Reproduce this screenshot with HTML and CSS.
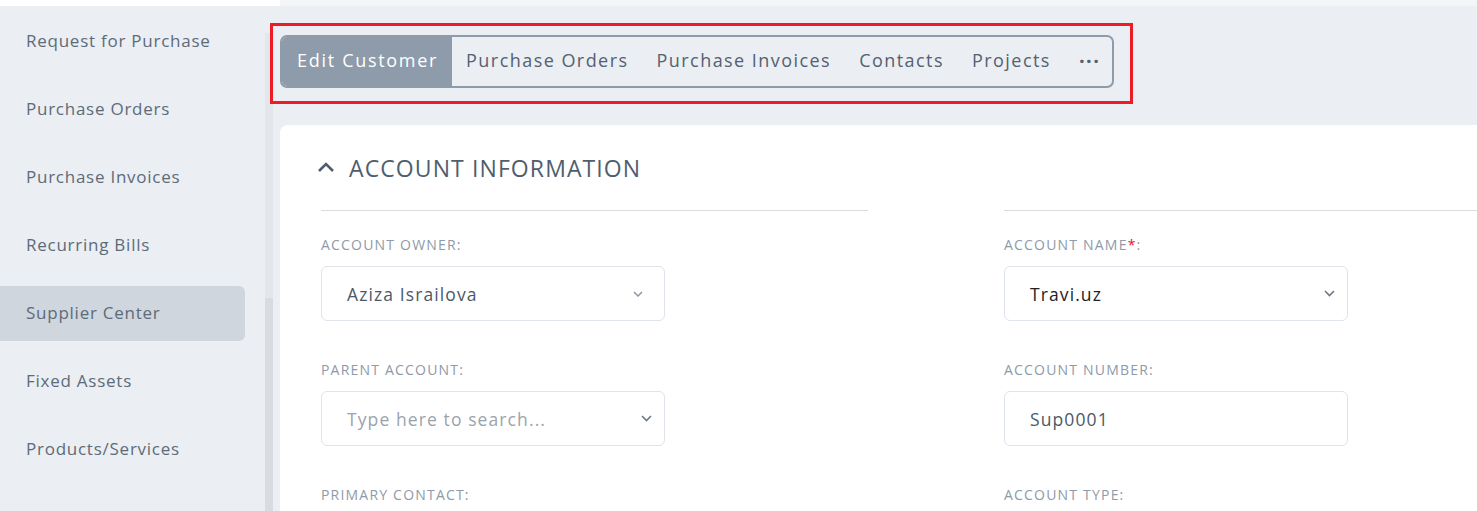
FILE: index.html
```html
<!DOCTYPE html>
<html lang="en">

<head>
    <meta charset="UTF-8">
    <meta name="viewport" content="width=device-width, initial-scale=1.0">
    <title>Edit Customer</title>
    <link rel="stylesheet" href="styles.css">
</head>

<body>

    <div class="app">
        <aside class="sidebar">
            <div class="nav-clip">
                <ul class="nav">
                    <li>Request for Purchase</li>
                    <li>Purchase Orders</li>
                    <li>Purchase Invoices</li>
                    <li>Recurring Bills</li>
                    <li class="active">Supplier Center</li>
                    <li>Fixed Assets</li>
                    <li>Products/Services</li>
                </ul>
            </div>
            <div class="scroll-track">
                <div class="scroll-thumb"></div>
            </div>
        </aside>

        <main class="main">
            <div class="highlight">
                <nav class="tabs">
                    <span class="tab active">Edit Customer</span>
                    <span class="tab">Purchase Orders</span>
                    <span class="tab">Purchase Invoices</span>
                    <span class="tab">Contacts</span>
                    <span class="tab">Projects</span>
                    <span class="tab more">&middot;&middot;&middot;</span>
                </nav>
            </div>

            <section class="card">
                <h2 class="card-title">
                    <svg class="caret-up" width="18" height="12" viewBox="0 0 18 12">
                        <path d="M2 10 L9 3 L16 10" fill="none" stroke="#4f5e6e" stroke-width="2.6" />
                    </svg>
                    ACCOUNT INFORMATION
                </h2>

                <div class="columns">
                    <div class="column">
                        <div class="field">
                            <label>Account Owner:</label>
                            <div class="input select wide-arrow">
                                <span>Aziza Israilova</span>
                                <svg class="chev light" width="10" height="6" viewBox="0 0 10 6">
                                    <path d="M1 1 L5 5 L9 1" fill="none" stroke-width="1.5" />
                                </svg>
                            </div>
                        </div>
                        <div class="field">
                            <label>Parent Account:</label>
                            <div class="input select">
                                <span class="placeholder">Type here to search...</span>
                                <svg class="chev" width="11" height="7" viewBox="0 0 11 7">
                                    <path d="M1 1 L5.5 5.5 L10 1" fill="none" stroke-width="1.6" />
                                </svg>
                            </div>
                        </div>
                        <div class="field">
                            <label>Primary Contact:</label>
                        </div>
                    </div>

                    <div class="column">
                        <div class="field">
                            <label>Account Name<span class="req">*</span>:</label>
                            <div class="input select">
                                <span class="dark">Travi.uz</span>
                                <svg class="chev" width="11" height="7" viewBox="0 0 11 7">
                                    <path d="M1 1 L5.5 5.5 L10 1" fill="none" stroke-width="1.6" />
                                </svg>
                            </div>
                        </div>
                        <div class="field">
                            <label>Account Number:</label>
                            <div class="input">
                                <span>Sup0001</span>
                            </div>
                        </div>
                        <div class="field">
                            <label>Account Type:</label>
                        </div>
                    </div>
                </div>
            </section>
        </main>
    </div>

</body>

</html>
```

FILE: styles.css
```css
body {
    font-family: 'Open Sans', 'Noto Sans', sans-serif;
    background-color: #ebeef2;
    margin: 0;
    padding: 0;
    height: 511px;
    overflow: hidden;
}

.app {
    display: flex;
    height: 511px;
}

/* sidebar */

.sidebar {
    width: 280px;
    flex-shrink: 0;
    display: flex;
    border-top: 6px solid #ffffff;
    box-sizing: border-box;
}

.nav-clip {
    width: 265px;
    margin-top: 29px;
    overflow: hidden;
}

.nav {
    list-style: none;
    margin: -21px 0 0 0;
    padding: 0;
}

.nav li {
    width: 245px;
    height: 55px;
    line-height: 53px;
    margin-bottom: 13px;
    padding-left: 26px;
    box-sizing: border-box;
    font-size: 17px;
    letter-spacing: 0.75px;
    color: #5d6b79;
    border-radius: 0 6px 6px 0;
    white-space: nowrap;
}

.nav li.active {
    background-color: #cfd6dd;
}

.scroll-track {
    width: 8px;
    margin-top: 27px;
    background-color: #e3e6ea;
}

.scroll-thumb {
    margin-top: 265px;
    height: 300px;
    background-color: #d8dbdf;
}

/* main */

.main {
    flex: 1;
    min-width: 0;
    border-top: 6px solid #f4f5f7;
    padding-top: 17px;
}

.highlight {
    display: inline-block;
    margin-left: -10px;
    padding: 9px 16px 13px 7px;
    border: 3px solid #ed1c24;
}

.tabs {
    display: flex;
    border: 2px solid #8e9baa;
    border-radius: 7px;
    overflow: hidden;
}

.tab {
    padding: 0 14px;
    height: 49px;
    line-height: 47px;
    font-size: 18px;
    letter-spacing: 1.45px;
    color: #536171;
    white-space: nowrap;
}

.tab:first-child {
    padding-left: 15px;
}

.tab.active {
    background-color: #8e9baa;
    color: #fff;
    letter-spacing: 1.7px;
}

.tab.more {
    font-size: 20px;
    font-weight: bold;
    letter-spacing: 1.5px;
    padding-right: 12px;
}

.card {
    margin-top: 21px;
    background-color: #fff;
    border-radius: 8px 0 0 0;
    padding-left: 41px;
    height: 400px;
}

.card-title {
    margin: 0;
    height: 85px;
    display: flex;
    align-items: center;
    gap: 14px;
    margin-left: -4px;
    font-size: 23px;
    font-weight: normal;
    color: #4f5e6e;
    letter-spacing: 1.1px;
}

.caret-up {
    margin-top: -2px;
}

.columns {
    display: grid;
    grid-template-columns: 547px 547px;
    column-gap: 136px;
}

.column {
    border-top: 1px solid #dcdcdc;
    padding-top: 26px;
}

.field {
    margin-bottom: 41px;
}

label {
    display: block;
    height: 16px;
    line-height: 16px;
    font-size: 14px;
    letter-spacing: 1.2px;
    color: #8e9aa9;
    text-transform: uppercase;
    margin-bottom: 13px;
}

.req {
    color: #e8131b;
}

.input {
    width: 344px;
    height: 55px;
    box-sizing: border-box;
    border: 1px solid #dfe3ea;
    border-radius: 6px;
    padding: 0 12px 0 25px;
    display: flex;
    align-items: center;
    justify-content: space-between;
    font-size: 17.5px;
    letter-spacing: 1.1px;
    color: #4b5967;
}

.input.wide-arrow {
    padding-right: 21px;
}

.placeholder {
    color: #9ba3ac;
}

.dark {
    color: #1f2328;
}

.chev path {
    stroke: #6c7885;
}

.chev.light path {
    stroke: #8d98a4;
}
```
